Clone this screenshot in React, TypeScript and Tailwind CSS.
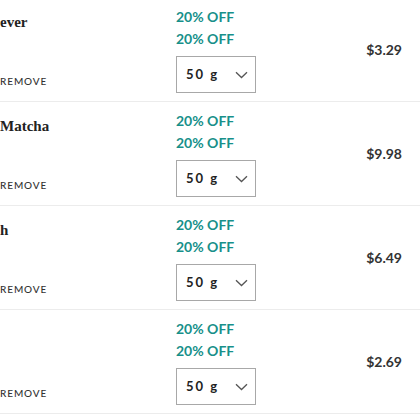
import React from "react";

const rows = [
  { name: "ever", price: "$3.29" },
  { name: "Matcha", price: "$9.98" },
  { name: "h", price: "$6.49" },
  { name: "", price: "$2.69" },
];

function Chevron() {
  return (
    <svg width="13" height="8" viewBox="0 0 13 8" fill="none">
      <path d="M1 1.2 L6.5 6.5 L12 1.2" stroke="#555" strokeWidth="1.3" />
    </svg>
  );
}

export default function App() {
  return (
    <div className="w-[420px] h-[420px] overflow-hidden bg-white">
      <div className="-mt-[2px]">
        {rows.map((r, i) => (
          <div key={i} className="flex h-[104px] border-b border-[#ececec]">
            <div className="w-[176px] flex flex-col justify-between pt-[14px] pb-[14px]">
              <div className="h-[20px] leading-[20px] text-[15px] font-bold text-[#222] font-['Liberation_Serif',serif]">
                {r.name}
              </div>
              <div className="h-[12px] leading-[12px] text-[10px] font-medium tracking-[0.9px] text-[#333] font-['Lato',sans-serif]">
                REMOVE
              </div>
            </div>
            <div className="w-[80px] pt-[8px] font-['Lato',sans-serif]">
              <div className="h-[22px] leading-[22px] text-[14px] font-bold text-[#17908a] whitespace-nowrap">
                20% OFF
              </div>
              <div className="h-[22px] leading-[22px] text-[14px] font-bold text-[#17908a] whitespace-nowrap">
                20% OFF
              </div>
              <div className="mt-[6px] h-[37px] w-[80px] border border-[#a8a8a8] flex items-center justify-between pl-[9px] pr-[7px]">
                <span className="text-[13px] font-bold tracking-[2px] text-[#222]">50 g</span>
                <Chevron />
              </div>
            </div>
            <div className="flex-1 flex items-center justify-end pr-[18px]">
              <span className="text-[14px] font-bold text-[#333] font-['Lato',sans-serif]">{r.price}</span>
            </div>
          </div>
        ))}
      </div>
    </div>
  );
}
